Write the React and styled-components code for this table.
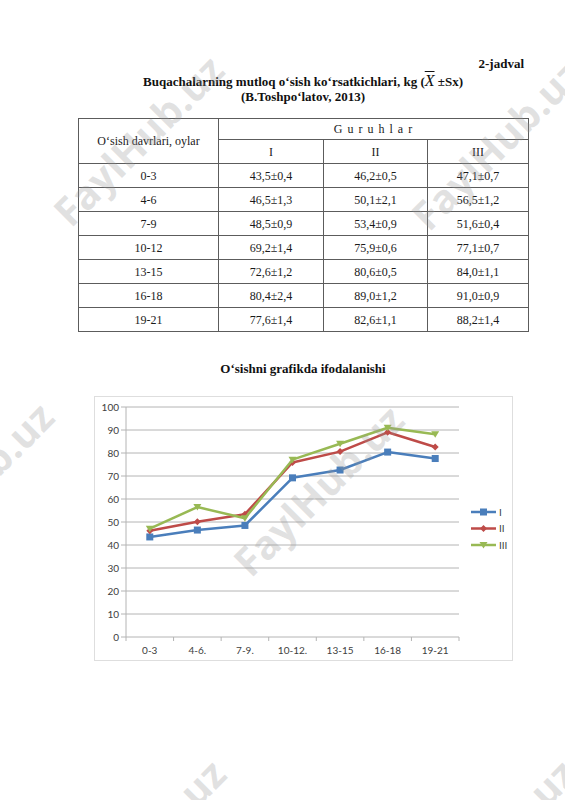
import React from 'react';
import styled, { createGlobalStyle } from 'styled-components';

const GlobalStyle = createGlobalStyle`
  html, body {
    margin: 0;
    padding: 0;
    background: #fff;
    overflow: hidden;
  }
`;

const Page = styled.div`
  position: relative;
  width: 565px;
  height: 800px;
  box-sizing: border-box;
  padding: 56px 37px 0 78px;
  overflow: hidden;
  background: #fff;
  font-family: 'Liberation Serif', 'Times New Roman', serif;
  color: #111;
`;

const TableLabel = styled.div`
  text-align: right;
  font-weight: bold;
  font-size: 13px;
  line-height: 16px;
  padding-right: 4px;
  margin-bottom: 2px;
`;

const Title = styled.h1`
  margin: 0;
  text-align: center;
  font-size: 13px;
  line-height: 15px;
  font-weight: bold;
`;

const MeanSymbol = styled.span`
  font-style: italic;
  font-weight: normal;
  font-size: 16px;
  line-height: 12px;
  text-decoration: overline;
  text-decoration-thickness: 1px;
`;

const DataTable = styled.table`
  width: 450px;
  margin-top: 14px;
  border-collapse: collapse;
  table-layout: fixed;
  font-size: 12px;
  color: #1a1a1a;
`;

const Row = styled.tr`
  height: ${(p) => p.$h || 24}px;
`;

const Cell = styled.td`
  border: 1px solid #5c5c5c;
  padding: 0;
  text-align: center;
  vertical-align: middle;
  font-weight: normal;
  line-height: 14px;
`;

const GroupCell = styled(Cell)`
  letter-spacing: 1px;
`;

const ChartTitle = styled.h2`
  margin: 29px 0 0;
  text-align: center;
  font-size: 13px;
  line-height: 16px;
  font-weight: bold;
`;

const ChartBox = styled.div`
  width: 419px;
  height: 265px;
  margin: 19px auto 0;
  box-sizing: border-box;
  border: 1px solid #dedede;
`;

const Watermark = styled.span`
  position: absolute;
  left: ${(p) => p.$x}px;
  top: ${(p) => p.$y}px;
  transform: translate(-50%, -50%) rotate(-45deg);
  font-family: 'Open Sans', 'DejaVu Sans', sans-serif;
  font-weight: 700;
  font-size: 40px;
  color: rgba(150, 150, 150, 0.28);
  white-space: nowrap;
  pointer-events: none;
`;

const rows = [
  ['0-3', '43,5±0,4', '46,2±0,5', '47,1±0,7'],
  ['4-6', '46,5±1,3', '50,1±2,1', '56,5±1,2'],
  ['7-9', '48,5±0,9', '53,4±0,9', '51,6±0,4'],
  ['10-12', '69,2±1,4', '75,9±0,6', '77,1±0,7'],
  ['13-15', '72,6±1,2', '80,6±0,5', '84,0±1,1'],
  ['16-18', '80,4±2,4', '89,0±1,2', '91,0±0,9'],
  ['19-21', '77,6±1,4', '82,6±1,1', '88,2±1,4'],
];

const categories = ['0-3', '4-6.', '7-9.', '10-12.', '13-15', '16-18', '19-21'];

const series = [
  { name: 'I', color: '#4a7ebb', marker: 'square', values: [43.5, 46.5, 48.5, 69.2, 72.6, 80.4, 77.6] },
  { name: 'II', color: '#be4b48', marker: 'diamond', values: [46.2, 50.1, 53.4, 75.9, 80.6, 89.0, 82.6] },
  { name: 'III', color: '#98b954', marker: 'triangle', values: [47.1, 56.5, 51.6, 77.1, 84.0, 91.0, 88.2] },
];

const watermarks = [
  [138, 140],
  [496, 144],
  [-32, 487],
  [318, 490],
  [140, 844],
  [490, 844],
];

const PLOT_LEFT = 31;
const PLOT_RIGHT = 364;
const STEP = (PLOT_RIGHT - PLOT_LEFT) / 7;
const yOf = (v) => 240 - v * 2.3;
const xOf = (i) => PLOT_LEFT + STEP * (i + 0.5);

function Marker({ type, x, y, color }) {
  if (type === 'square') {
    return <rect x={x - 3.5} y={y - 3.5} width="7" height="7" fill={color} />;
  }
  if (type === 'diamond') {
    return <polygon points={`${x},${y - 3.5} ${x + 3.5},${y} ${x},${y + 3.5} ${x - 3.5},${y}`} fill={color} />;
  }
  return <polygon points={`${x - 4},${y - 3} ${x + 4},${y - 3} ${x},${y + 3.5}`} fill={color} />;
}

function GrowthChart() {
  const ticks = [0, 10, 20, 30, 40, 50, 60, 70, 80, 90, 100];
  return (
    <svg width="417" height="263" viewBox="0 0 417 263">
      {ticks.map((t) => (
        <g key={t}>
          <line x1={PLOT_LEFT - 5} x2={PLOT_RIGHT} y1={yOf(t)} y2={yOf(t)} stroke="#b4b4b4" strokeWidth="1" />
          <text
            x={PLOT_LEFT - 7}
            y={yOf(t) + 3.5}
            textAnchor="end"
            fontFamily="Lato, 'Open Sans', sans-serif"
            fontSize="10"
            fill="#404040"
          >
            {t}
          </text>
        </g>
      ))}
      <line x1={PLOT_LEFT} x2={PLOT_LEFT} y1={yOf(100)} y2={yOf(0) + 4} stroke="#b4b4b4" strokeWidth="1" />
      {categories.map((c, i) => (
        <g key={c}>
          <line
            x1={PLOT_LEFT + STEP * (i + 1)}
            x2={PLOT_LEFT + STEP * (i + 1)}
            y1={yOf(0)}
            y2={yOf(0) + 4}
            stroke="#b4b4b4"
            strokeWidth="1"
          />
          <text
            x={xOf(i)}
            y={257}
            textAnchor="middle"
            fontFamily="Lato, 'Open Sans', sans-serif"
            fontSize="10"
            fill="#404040"
          >
            {c}
          </text>
        </g>
      ))}
      {series.map((s) => (
        <g key={s.name}>
          <polyline
            points={s.values.map((v, i) => `${xOf(i)},${yOf(v)}`).join(' ')}
            fill="none"
            stroke={s.color}
            strokeWidth="2.5"
            strokeLinejoin="round"
          />
          {s.values.map((v, i) => (
            <Marker key={i} type={s.marker} x={xOf(i)} y={yOf(v)} color={s.color} />
          ))}
        </g>
      ))}
      {series.map((s, i) => {
        const ly = 115 + i * 16.5;
        return (
          <g key={`legend-${s.name}`}>
            <line x1="376" x2="401" y1={ly} y2={ly} stroke={s.color} strokeWidth="2.5" />
            <Marker type={s.marker} x={388.5} y={ly} color={s.color} />
            <text
              x="404"
              y={ly + 3.5}
              fontFamily="Lato, 'Open Sans', sans-serif"
              fontSize="10"
              fill="#404040"
            >
              {s.name}
            </text>
          </g>
        );
      })}
    </svg>
  );
}

export default function App() {
  return (
    <>
      <GlobalStyle />
      <Page>
        <TableLabel>2-jadval</TableLabel>
        <Title>
          Buqachalarning mutloq o‘sish ko‘rsatkichlari, kg (<MeanSymbol>X</MeanSymbol> ±Sx)
          <br />
          (B.Toshpo‘latov, 2013)
        </Title>

        <DataTable>
          <colgroup>
            <col style={{ width: 140 }} />
            <col style={{ width: 105 }} />
            <col style={{ width: 104 }} />
            <col style={{ width: 101 }} />
          </colgroup>
          <thead>
            <Row $h={21}>
              <Cell as="th" rowSpan={2}>O‘sish davrlari, oylar</Cell>
              <GroupCell as="th" colSpan={3}>G u r u h l a r</GroupCell>
            </Row>
            <Row>
              <Cell as="th">I</Cell>
              <Cell as="th">II</Cell>
              <Cell as="th">III</Cell>
            </Row>
          </thead>
          <tbody>
            {rows.map((r) => (
              <Row key={r[0]}>
                {r.map((v, i) => (
                  <Cell key={i}>{v}</Cell>
                ))}
              </Row>
            ))}
          </tbody>
        </DataTable>

        <ChartTitle>O‘sishni grafikda ifodalanishi</ChartTitle>
        <ChartBox>
          <GrowthChart />
        </ChartBox>

        {watermarks.map(([x, y], i) => (
          <Watermark key={i} $x={x} $y={y}>
            FaylHub.uz
          </Watermark>
        ))}
      </Page>
    </>
  );
}
